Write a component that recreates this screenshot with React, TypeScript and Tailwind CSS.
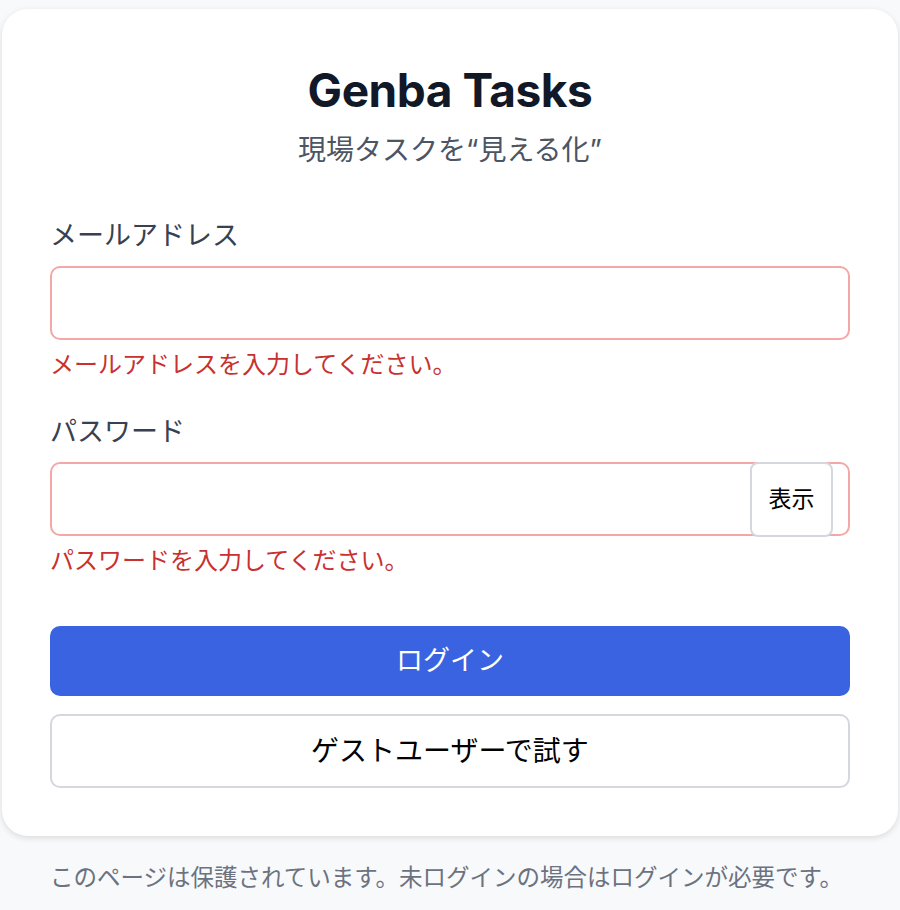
export default function App() {
  return (
    <div className="min-h-screen bg-[#f8f9fb] px-[2px] pt-[9px] font-['Inter','Noto_Sans_CJK_JP',sans-serif]">
      <div className="rounded-[26px] bg-white px-12 pt-[61px] pb-12 shadow-[0_2px_6px_rgba(0,0,0,0.12)]">
        <h1 className="text-center text-[46px] leading-[40px] font-bold tracking-[-0.01em] text-[#111827]">
          Genba Tasks
        </h1>
        <p className="mt-6 text-center text-[28px] leading-[32px] text-[#4b5563]">
          現場タスクを“見える化”
        </p>

        <form className="flex flex-col" onSubmit={(e) => e.preventDefault()}>
          <label className="mt-[52px] text-[27px] leading-[36px] text-[#374151]">メールアドレス</label>
          <input
            type="email"
            className="mt-3 h-[74px] w-full rounded-[10px] border-2 border-[#f4a7a7] bg-white px-4 text-[24px] outline-none"
          />
          <p className="mt-[9px] text-[24px] leading-[32px] text-[#c8312f]">メールアドレスを入力してください。</p>

          <label className="mt-[33px] text-[27px] leading-[36px] text-[#374151]">パスワード</label>
          <div className="relative mt-3">
            <input
              type="password"
              className="h-[74px] w-full rounded-[10px] border-2 border-[#f4a7a7] bg-white px-4 pr-28 text-[24px] outline-none"
            />
            <button
              type="button"
              className="absolute top-0 right-[17px] h-[75px] w-[83px] rounded-lg border-2 border-[#d4d7dd] bg-white text-[23px] text-black"
            >
              表示
            </button>
          </div>
          <p className="mt-[9px] text-[24px] leading-[32px] text-[#c8312f]">パスワードを入力してください。</p>

          <button
            type="submit"
            className="mt-[49px] h-[70px] w-full rounded-[10px] bg-[#3a63e2] text-[27px] text-white"
          >
            ログイン
          </button>
          <button
            type="button"
            className="mt-[18px] h-[74px] w-full rounded-[10px] border-2 border-[#d4d7dd] bg-white text-[28px] text-black"
          >
            ゲストユーザーで試す
          </button>
        </form>
      </div>
      <p className="mt-[26px] whitespace-nowrap px-12 text-[23.5px] leading-[32px] text-[#6b7280]">
        このページは保護されています。未ログインの場合はログインが必要です。
      </p>
    </div>
  );
}
